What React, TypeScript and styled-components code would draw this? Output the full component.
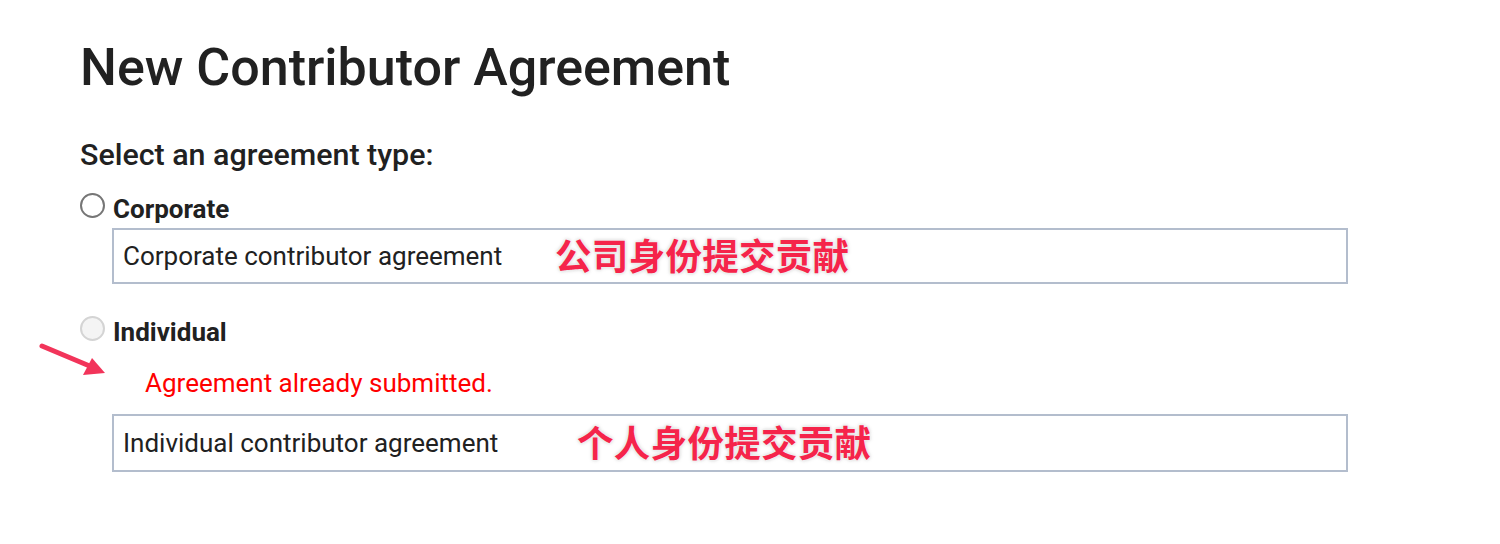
import React from "react";
import styled, { createGlobalStyle } from "styled-components";

const Global = createGlobalStyle`
  html, body { margin: 0; padding: 0; background: #ffffff; }
  body { font-family: Roboto, "Noto Sans", Arial, sans-serif; color: #212121; font-size: 26px; }
`;

const Page = styled.main`
  position: relative;
  padding: 38px 0 0 80px;
  width: 1268px;
`;

const Title = styled.h1`
  margin: 0 0 39px;
  font-size: 52px;
  line-height: 60px;
  font-weight: 500;
  color: #212121;
`;

const Prompt = styled.h2`
  margin: 0 0 20px;
  font-size: 30.4px;
  line-height: 36px;
  font-weight: 500;
  color: #212121;
`;

const Option = styled.section<{ $gap: number }>`
  display: flex;
  flex-direction: column;
  margin-bottom: ${(p) => p.$gap}px;
`;

const RadioRow = styled.label`
  display: flex;
  align-items: center;
  gap: 8px;
  height: 32px;
  font-size: 26px;
  font-weight: 700;
  color: #212121;
`;

const Radio = styled.span<{ $disabled?: boolean }>`
  width: 21px;
  height: 21px;
  border-radius: 50%;
  box-sizing: content-box;
  border: 2px solid ${(p) => (p.$disabled ? "#d4d4d4" : "#767676")};
  background: ${(p) => (p.$disabled ? "#f4f4f4" : "#ffffff")};
  margin-top: -8px;
`;

const ErrorText = styled.p`
  margin: 19px 0 15px 65px;
  font-size: 26px;
  line-height: 32px;
  color: #ff0000;
`;

const Box = styled.div<{ $h: number; $top: number }>`
  position: relative;
  margin: ${(p) => p.$top}px 0 0 32px;
  width: 1236px;
  height: ${(p) => p.$h}px;
  box-sizing: border-box;
  border: 2px solid #b3bdcd;
  display: flex;
  align-items: center;
  padding-left: 9px;
  font-size: 26px;
  color: #212121;
`;

const Note = styled.span<{ $left: number }>`
  position: absolute;
  left: ${(p) => p.$left}px;
  top: 50%;
  transform: translateY(-52%);
  font-family: "Noto Sans CJK SC", sans-serif;
  font-weight: 700;
  font-size: 36.5px;
  color: #f5244a;
  letter-spacing: 0.3px;
  text-shadow: 0 0 2px #fff, 0 0 3px #ddd, 0 0 4px #ccc;
`;

const Arrow = styled.svg`
  position: absolute;
  left: 36px;
  top: 338px;
`;

export default function App() {
  return (
    <>
      <Global />
      <Page>
        <Title>New Contributor Agreement</Title>
        <Prompt>Select an agreement type:</Prompt>
        <Option $gap={32}>
          <RadioRow>
            <Radio />
            Corporate
          </RadioRow>
          <Box $h={56} $top={3}>
            Corporate contributor agreement
            <Note $left={441}>公司身份提交贡献</Note>
          </Box>
        </Option>
        <Option $gap={0}>
          <RadioRow>
            <Radio $disabled />
            Individual
          </RadioRow>
          <ErrorText>Agreement already submitted.</ErrorText>
          <Box $h={58} $top={0}>
            Individual contributor agreement
            <Note $left={463}>个人身份提交贡献</Note>
          </Box>
        </Option>
        <Arrow width="76" height="42" viewBox="0 0 76 42">
          <line x1="6" y1="8" x2="56" y2="29" stroke="#f2345a" strokeWidth="5" strokeLinecap="round" />
          <polygon points="69,35 47,37 56,20" fill="#f2345a" />
        </Arrow>
      </Page>
    </>
  );
}
